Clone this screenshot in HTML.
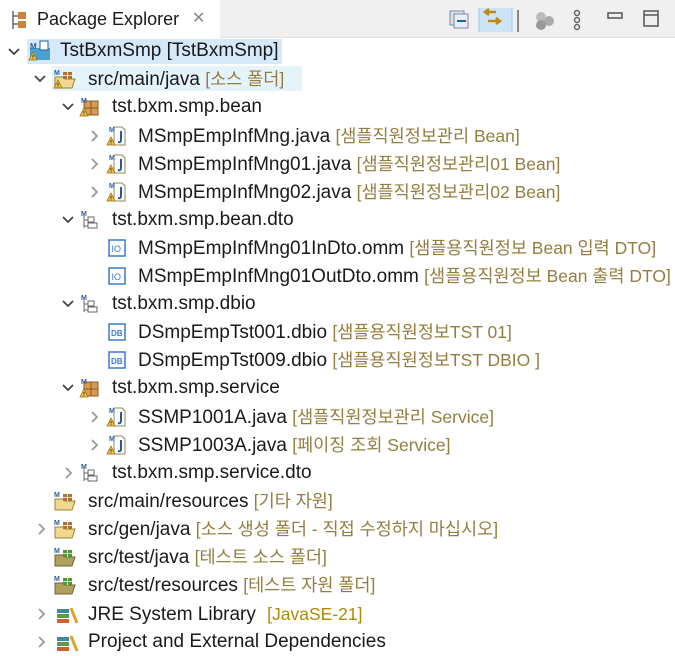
<!DOCTYPE html>
<html><head><meta charset="utf-8"><style>
body{margin:0;width:675px;height:656px;overflow:hidden;background:#fff;font-family:"Liberation Sans","Noto Sans CJK KR",sans-serif;font-size:19px;color:#1a1a1a;position:relative}
.top{position:absolute;left:0;top:0;width:675px;height:37px;background:#f0f0f0;border-bottom:1px solid #e2e2e2}
.tab{position:absolute;left:0;top:0;width:220px;height:38px;background:#fff}
.r{position:absolute;height:26px;line-height:26px;white-space:nowrap}
.d{color:#957d40;font-size:17.5px}
.hl{position:absolute}
</style></head><body>
<div class="top"></div><div class="tab"></div>
<svg style="position:absolute;left:10px;top:10px" width="18" height="20"><path d="M3 1V19M3 6H8M3 14H8" stroke="#667" stroke-width="1.5" fill="none"/><rect x="8" y="2" width="8" height="7" fill="#c8823a"/><rect x="8" y="11" width="8" height="7" fill="#c8823a"/></svg>
<div class="r" style="left:37px;top:6px;font-size:18px">Package Explorer</div>
<div class="r" style="left:192px;top:6px;color:#888;font-size:16px">✕</div>
<svg style="position:absolute;left:448px;top:8px" width="227" height="24">
<rect x="2" y="3" width="14" height="14" fill="#d8e0ea" stroke="#7a8aa0"/><rect x="6" y="6" width="14" height="14" fill="#e8eef4" stroke="#7a8aa0"/><path d="M9 13H18" stroke="#2060a0" stroke-width="2"/>
<rect x="31" y="-6" width="33" height="34" fill="#cce4f7" stroke="#99c9ef"/>
<path d="M48 4H38M41 1L37 4L41 7M40 13H51M48 10L52 13L48 16" stroke="#c08a10" stroke-width="2.5" fill="none"/>
<rect x="69" y="2" width="2" height="22" fill="#888"/>
<circle cx="93" cy="9" r="5" fill="#bbb"/><circle cx="101" cy="13" r="5" fill="#aaa"/><circle cx="93" cy="17" r="5" fill="#999"/>
<circle cx="129" cy="5" r="2.5" fill="none" stroke="#666" stroke-width="1.5"/><circle cx="129" cy="12" r="2.5" fill="none" stroke="#666" stroke-width="1.5"/><circle cx="129" cy="19" r="2.5" fill="none" stroke="#666" stroke-width="1.5"/>
<rect x="160" y="5" width="14" height="5" fill="none" stroke="#555" stroke-width="1.5"/>
<rect x="196" y="3" width="14" height="15" fill="none" stroke="#555" stroke-width="1.5"/><path d="M196 7H210" stroke="#555" stroke-width="1.5"/>
</svg>

<div class="hl" style="left:27px;top:39px;width:255px;height:25px;background:#d5e9f9"></div>
<div class="hl" style="left:52px;top:66px;width:250px;height:25px;background:#e5f3fb"></div>

<svg style="position:absolute;left:0;top:38px" width="675" height="618">
<defs>
<g id="dn"><path d="M-5 -3L0 2L5 -3" stroke="#444" stroke-width="1.8" fill="none"/></g>
<g id="rt"><path d="M-2 -5L3 0L-2 5" stroke="#999" stroke-width="1.8" fill="none"/></g>
<g id="warn"><path d="M4 0L8 8H0Z" fill="#f0c040" stroke="#a07010" stroke-width="0.8"/><path d="M4 3V5.5M4 6.5V7.3" stroke="#333"/></g>
<g id="java"><path d="M4 -9H12L15 -6V9H4Z" fill="#fff" stroke="#8a8a60"/><path d="M11 -5V4Q11 7 8 6" stroke="#2a5a9a" stroke-width="2" fill="none"/><text x="-1" y="-4" font-size="7" font-weight="bold" fill="#2a5a9a" font-family="Liberation Sans">M</text><use href="#warn" x="-3" y="1"/></g>
<g id="pkg"><rect x="2" y="-6" width="14" height="14" fill="#d89a50" stroke="#8a5a20"/><path d="M9 -6V8M2 1H16" stroke="#8a5a20"/><text x="-1" y="-4" font-size="7" font-weight="bold" fill="#2a5a9a" font-family="Liberation Sans">M</text><use href="#warn" x="-2" y="1"/></g>
<g id="pkge"><path d="M2 -4V8M2 0H6M2 6H6" stroke="#666" fill="none"/><rect x="6" y="-3" width="6" height="5" fill="none" stroke="#666"/><rect x="6" y="3" width="9" height="5" fill="none" stroke="#666"/><text x="-1" y="-4" font-size="7" font-weight="bold" fill="#2a5a9a" font-family="Liberation Sans">M</text></g>
<g id="io"><rect x="1" y="-8" width="16" height="16" fill="#fff" stroke="#3a7ad0" stroke-width="1.5"/><text x="3.5" y="4" font-size="9" fill="#3a7ad0" font-family="Liberation Sans">IO</text></g>
<g id="db"><rect x="1" y="-8" width="16" height="16" fill="#fff" stroke="#3a7ad0" stroke-width="1.5"/><text x="3" y="4" font-size="8" font-weight="bold" fill="#3a7ad0" font-family="Liberation Sans">DB</text></g>
<g id="src"><path d="M0 -2H8L10 0H20L17 9H0Z" fill="#f0d890" stroke="#a08030"/><rect x="8" y="-7" width="9" height="7" fill="#b07030"/><path d="M12.5 -7V0M8 -3.5H17" stroke="#fff" stroke-width="0.8"/><text x="-1" y="-4" font-size="7" font-weight="bold" fill="#2a5a9a" font-family="Liberation Sans">M</text></g>
<g id="srcg"><path d="M0 -2H8L10 0H20L17 9H0Z" fill="#b0a060" stroke="#706030"/><rect x="8" y="-7" width="9" height="7" fill="#4a9a30"/><path d="M12.5 -7V0M8 -3.5H17" stroke="#fff" stroke-width="0.8"/><text x="-1" y="-4" font-size="7" font-weight="bold" fill="#2a5a9a" font-family="Liberation Sans">M</text></g>
<g id="lib"><rect x="0" y="-5" width="12" height="4" fill="#3a8a9a"/><rect x="0" y="0" width="12" height="4" fill="#5a9a50"/><rect x="0" y="5" width="12" height="4" fill="#d06030"/><path d="M14 -6L20 9" stroke="#e0a020" stroke-width="3"/></g>
</defs>
<use href="#dn" x="14" y="14"/>
<g transform="translate(30,13)"><rect x="0" y="-3" width="20" height="12" fill="#4aa0d0"/><text x="0" y="-2" font-size="8" font-weight="bold" fill="#2a5a9a" font-family="Liberation Sans">M</text><rect x="10" y="-10" width="8" height="9" fill="#fff" stroke="#2a5a9a"/><use href="#warn" x="-1" y="1"/></g>
<use href="#dn" x="40" y="41"/><g transform="translate(55,41)"><use href="#src"/><use href="#warn" x="-1" y="1"/></g>
<use href="#dn" x="68" y="69"/><use href="#pkg" x="82" y="69"/>
<use href="#rt" x="94" y="98"/><use href="#java" x="110" y="98"/>
<use href="#rt" x="94" y="126"/><use href="#java" x="110" y="126"/>
<use href="#rt" x="94" y="154"/><use href="#java" x="110" y="154"/>
<use href="#dn" x="68" y="182"/><use href="#pkge" x="82" y="182"/>
<use href="#io" x="108" y="210"/><use href="#io" x="108" y="238"/>
<use href="#dn" x="68" y="266"/><use href="#pkge" x="82" y="266"/>
<use href="#db" x="108" y="294"/><use href="#db" x="108" y="322"/>
<use href="#dn" x="68" y="350"/><use href="#pkg" x="82" y="350"/>
<use href="#rt" x="94" y="379"/><use href="#java" x="110" y="379"/>
<use href="#rt" x="94" y="407"/><use href="#java" x="110" y="407"/>
<use href="#rt" x="68" y="435"/><use href="#pkge" x="82" y="435"/>
<use href="#src" x="55" y="463"/>
<use href="#rt" x="41" y="491"/><use href="#src" x="55" y="491"/>
<use href="#srcg" x="55" y="519"/><use href="#srcg" x="55" y="547"/>
<use href="#rt" x="41" y="576"/><use href="#lib" x="57" y="576"/>
<use href="#rt" x="41" y="604"/><use href="#lib" x="57" y="604"/>
</svg>

<div class="r" style="left:60px;top:38px">TstBxmSmp [TstBxmSmp]</div>
<div class="r" style="left:88px;top:66px">src/main/java <span class="d">[소스 폴더]</span></div>
<div class="r" style="left:112px;top:94px">tst.bxm.smp.bean</div>
<div class="r" style="left:138px;top:123px">MSmpEmpInfMng.java <span class="d">[샘플직원정보관리 Bean]</span></div>
<div class="r" style="left:138px;top:151px">MSmpEmpInfMng01.java <span class="d">[샘플직원정보관리01 Bean]</span></div>
<div class="r" style="left:138px;top:179px">MSmpEmpInfMng02.java <span class="d">[샘플직원정보관리02 Bean]</span></div>
<div class="r" style="left:112px;top:207px">tst.bxm.smp.bean.dto</div>
<div class="r" style="left:138px;top:235px">MSmpEmpInfMng01InDto.omm <span class="d">[샘플용직원정보 Bean 입력 DTO]</span></div>
<div class="r" style="left:138px;top:263px">MSmpEmpInfMng01OutDto.omm <span class="d">[샘플용직원정보 Bean 출력 DTO]</span></div>
<div class="r" style="left:112px;top:291px">tst.bxm.smp.dbio</div>
<div class="r" style="left:138px;top:319px">DSmpEmpTst001.dbio <span class="d">[샘플용직원정보TST 01]</span></div>
<div class="r" style="left:138px;top:347px">DSmpEmpTst009.dbio <span class="d">[샘플용직원정보TST DBIO ]</span></div>
<div class="r" style="left:112px;top:375px">tst.bxm.smp.service</div>
<div class="r" style="left:138px;top:404px">SSMP1001A.java <span class="d">[샘플직원정보관리 Service]</span></div>
<div class="r" style="left:138px;top:432px">SSMP1003A.java <span class="d">[페이징 조회 Service]</span></div>
<div class="r" style="left:112px;top:460px">tst.bxm.smp.service.dto</div>
<div class="r" style="left:88px;top:488px">src/main/resources <span class="d">[기타 자원]</span></div>
<div class="r" style="left:88px;top:516px">src/gen/java <span class="d">[소스 생성 폴더 - 직접 수정하지 마십시오]</span></div>
<div class="r" style="left:88px;top:544px">src/test/java <span class="d">[테스트 소스 폴더]</span></div>
<div class="r" style="left:88px;top:572px">src/test/resources <span class="d">[테스트 자원 폴더]</span></div>
<div class="r" style="left:88px;top:601px">JRE System Library <span style="color:#b08a00;margin-left:6px;font-size:17.5px">[JavaSE-21]</span></div>
<div class="r" style="left:88px;top:629px">Project and External Dependencies</div>
</body></html>
